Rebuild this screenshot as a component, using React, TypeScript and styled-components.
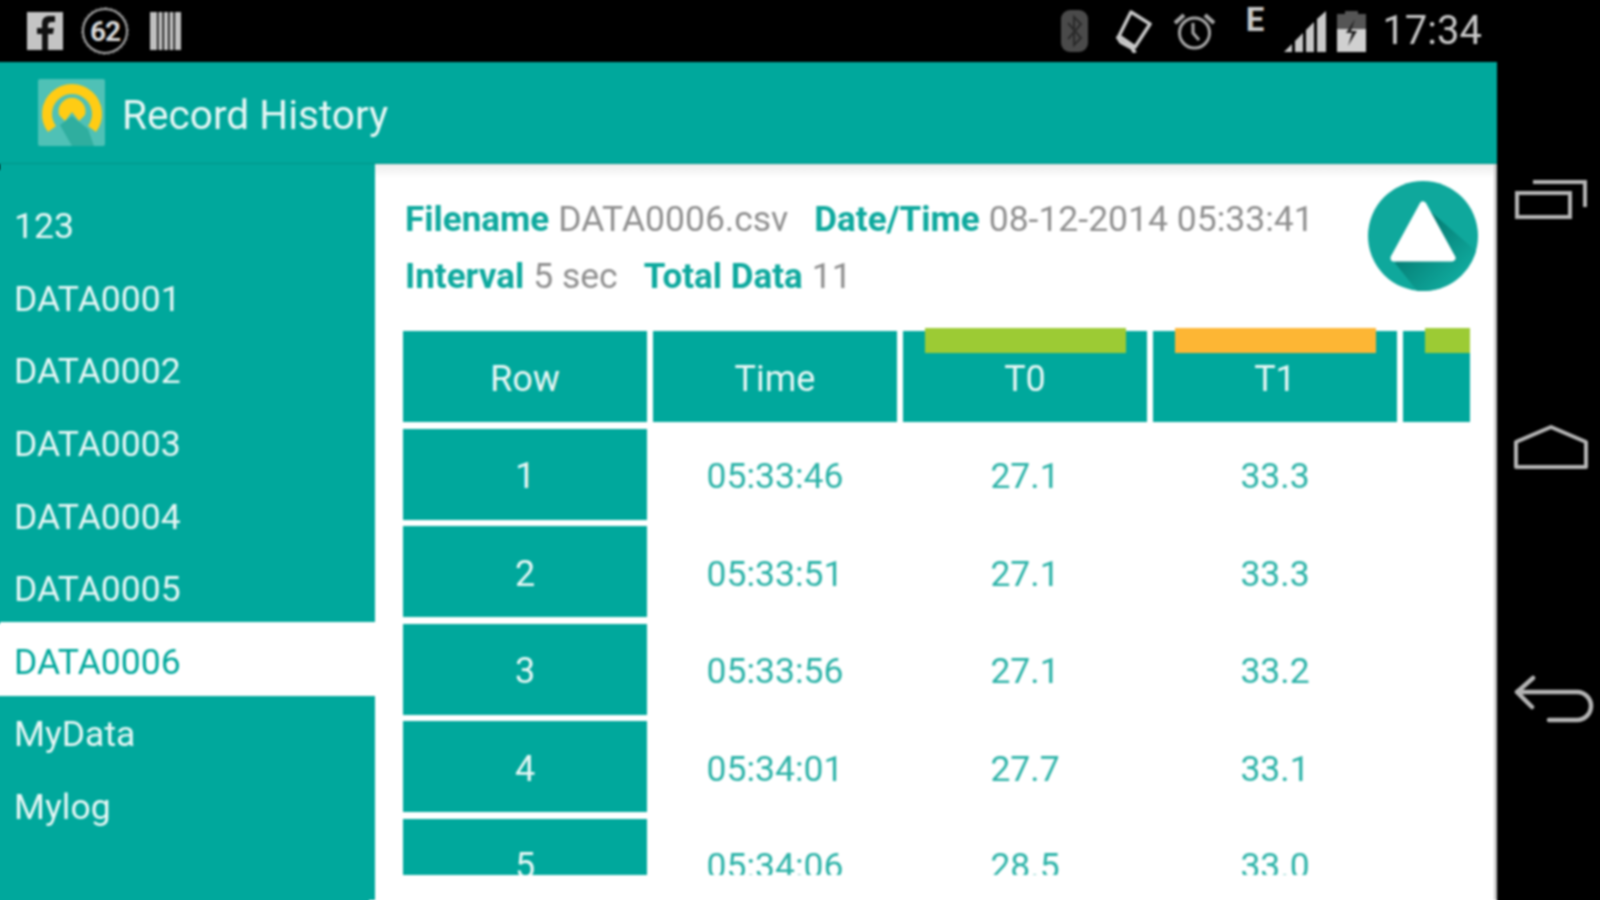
import React from "react";
import styled, { createGlobalStyle } from "styled-components";

const TEAL = "#00a89c";
const font = `Roboto, "Liberation Sans", sans-serif`;

const Global = createGlobalStyle`
  html, body { margin: 0; padding: 0; background: #000; overflow: hidden; }
  #root { width: 1600px; height: 900px; }
`;
const Frame = styled.div`
  width: 1600px; height: 900px; display: flex; background: #000;
  font-family: ${font}; filter: blur(0.8px);
`;
const Main = styled.div`
  width: 1497px; flex: none; display: flex; flex-direction: column; height: 900px;
`;
const StatusBar = styled.div`
  height: 62px; flex: none; background: #000; display: flex; align-items: center;
  justify-content: space-between; padding: 0 15px 0 27px; color: #c4c4c4;
`;
const StatusGroup = styled.div`display: flex; align-items: center;`;
const Slot = styled.span`display: flex; align-items: center; margin-left: ${p => p.$ml ?? 0}px;`;
const Time = styled.span`font-size: 40px; color: #c8c8c8; line-height: 62px;`;
const Badge = styled.div`
  width: 42px; height: 42px; border: 2px solid #a8a8a8; border-radius: 50%; display: flex;
  align-items: center; justify-content: center; font-size: 28px; font-weight: 700; color: #d8d8d8; letter-spacing: -1px;
  outline: 1px dashed #555;
`;
const NetType = styled.span`
  font-size: 33px; font-weight: 700; color: #c8c8c8; line-height: 30px; margin-top: -22px;
`;
const AppBar = styled.header`
  height: 102px; flex: none; background: ${TEAL}; display: flex; align-items: center;
  padding-left: 38px; gap: 17px; border-bottom: 1px solid #009488; box-sizing: border-box;
  box-shadow: -6px 0 0 ${TEAL};
`;
const AppTitle = styled.h1`margin: 0; padding-top: 4px; font-size: 40.600px; font-weight: 400; color: #e6f7f5;`;
const Body = styled.div`
  flex: 1; min-height: 0; display: flex; background: #fff; border-right: 3px solid #c9c9c9;
  box-shadow: 0 6px 0 #fff;
`;
const Sidebar = styled.nav`
  width: 375px; flex: none; background: ${TEAL}; padding-top: 24px; box-sizing: border-box;
  display: flex; flex-direction: column; box-shadow: -6px 6px 0 ${TEAL};
`;
const SideItem = styled.div`
  height: 72.6px; flex: none; padding: 4px 0 0 14px; box-sizing: border-box; display: flex; align-items: center;
  font-size: 35.500px; color: ${p => (p.$active ? TEAL : "#e6f7f5")};
  background: ${p => (p.$active ? "#fff" : "transparent")};
  box-shadow: ${p => (p.$active ? "0 -2px 0 #fff, -6px 0 0 #fff" : "none")};
`;
const Content = styled.section`
  flex: 1; min-width: 0; padding: 0 16px 0 28px; box-sizing: border-box; display: flex; flex-direction: column;
  background: linear-gradient(#ececec, #fff 14px);
`;
const InfoRow = styled.div`display: flex; justify-content: space-between; height: 164px; flex: none;`;
const InfoText = styled.div`padding: 26px 0 0 2px; display: flex; flex-direction: column;`;
const InfoLine = styled.div`display: flex; height: 57px; align-items: center; font-size: 35.500px; color: #8f8f8f; gap: 26px; white-space: nowrap;`;
const Label = styled.b`font-size: 35px; font-weight: 700; color: #0ea99e; margin-right: 9px;`;
const Fab = styled.svg`width: 110px; height: 110px; flex: none; margin-top: 17px;`;
const Table = styled.div`
  width: 1067px; height: 547px; overflow: hidden; display: flex; flex-direction: column; gap: 6.5px; padding-top: 3px;
  box-sizing: border-box;
`;
const TRow = styled.div`display: grid; grid-template-columns: repeat(5, 244px); column-gap: 6px; flex: none; height: 91px;`;
const HeadCell = styled.div`
  position: relative; background: ${TEAL}; color: #e6f7f5; font-size: 36px; padding-top: 4px; box-sizing: border-box; display: flex; align-items: center; justify-content: center;
`;
const ColorBar = styled.div`
  position: absolute; top: -3px; left: 22px; width: 201px; height: 25px; background: ${p => p.$c};
`;
const Val = styled.div`font-size: 35.500px; color: #2cb3a8; display: flex; align-items: center; justify-content: center; padding-top: 4px;`;
const NavRail = styled.aside`
  width: 101px; flex: none; margin-left: 2px; display: flex; flex-direction: column; align-items: center; gap: 200px; padding-top: 176px; box-sizing: border-box;
`;

const rows = [
  ["1", "05:33:46", "27.1", "33.3"],
  ["2", "05:33:51", "27.1", "33.3"],
  ["3", "05:33:56", "27.1", "33.2"],
  ["4", "05:34:01", "27.7", "33.1"],
  ["5", "05:34:06", "28.5", "33.0"],
];
const side = ["123", "DATA0001", "DATA0002", "DATA0003", "DATA0004", "DATA0005", "DATA0006", "MyData", "Mylog"];

const FbIcon = () => (
  <svg width="36" height="38" viewBox="0 0 36 38">
    <rect width="36" height="38" fill="#c4c4c4" />
    <path d="M15 38V22h-5v-6h5v-4c0-6 3-8 8-8h5v6h-3c-3 0-4 1-4 3v3h6l-1 6h-5v16z" fill="#111" />
  </svg>
);
const Barcode = () => (
  <svg width="31" height="38" viewBox="0 0 31 38" fill="#c0c0c0">
    <rect x="0" width="7" height="38" /><rect x="8.500" width="4" height="38" /><rect x="14" width="4" height="38" />
    <rect x="19.500" width="4" height="38" /><rect x="25" width="6" height="38" />
  </svg>
);
const Bluetooth = () => (
  <svg width="27" height="42" viewBox="0 0 27 42">
    <rect width="27" height="42" rx="9" fill="#4a4a4a" />
    <path d="M7 13l13 15-7 7V7l7 7L7 29" fill="none" stroke="#2a2a2a" strokeWidth="2" />
  </svg>
);
const Rotate = () => (
  <svg width="36" height="44" viewBox="0 0 36 44" fill="none" stroke="#c8c8c8" strokeWidth="3.500">
    <path d="M15 3L34 15 19 38 3 27z" strokeLinejoin="round" />
    <path d="M1 27l4 6 11 6 3 5" strokeWidth="4" />
  </svg>
);
const Alarm = () => (
  <svg width="41" height="38" viewBox="0 0 41 38" fill="none" stroke="#a8a8a8" strokeWidth="3">
    <circle cx="20.500" cy="21" r="15" />
    <path d="M19 11v10l6 7" /><path d="M1 11l9-8M40 11l-9-8" strokeWidth="4" />
  </svg>
);
const Signal = () => (
  <svg width="43" height="41" viewBox="0 0 43 41" fill="#c8c8c8">
    <path d="M0 41l8-8v8zM11 41V30l8-8v19zM22 41V19l8-8v30zM33 41V8l9-8v41z" />
  </svg>
);
const Battery = () => (
  <svg width="29" height="41" viewBox="0 0 29 41">
    <rect x="8" width="13" height="4" fill="#555" />
    <rect y="3" width="29" height="38" fill="#555" />
    <rect y="18" width="29" height="23" fill="#d0d0d0" />
    <path d="M18 8l-9 14h6l-4 13 9-15h-6z" fill="#222" />
  </svg>
);
const Logo = () => (
  <svg width="67" height="67" viewBox="0 0 67 67">
    <rect width="67" height="67" rx="2" fill="#4fc1b6" />
    <path d="M22 46L34 37l16 13 6 17H34z" fill="#2fae9f" />
    <path d="M14 50A25 25 0 1 1 54 50" fill="none" stroke="#ffcc14" strokeWidth="10" />
    <path d="M21 36a13.500 13.500 0 1 1 26 0l-6 6-7-9-7 9z" fill="#ffcc14" />
  </svg>
);
const Triangle = () => (
  <>
    <defs>
      <linearGradient id="fabShade" x1="0.300" y1="0.300" x2="0.800" y2="0.800">
        <stop offset="0" stopColor="#067f76" />
        <stop offset="1" stopColor="#0fa89c" />
      </linearGradient>
    </defs>
    <circle cx="55" cy="55" r="55" fill="#0fa89c" />
    <path d="M62 30L108 70A55 55 0 0 1 49 109.700L27 82z" fill="url(#fabShade)" />
    <path d="M55 24L84 77H26z" fill="#fff" stroke="#fff" strokeWidth="7" strokeLinejoin="round" />
  </>
);

export default function App() {
  return (
    <Frame>
      <Global />
      <Main>
        <StatusBar>
          <StatusGroup>
            <FbIcon />
            <Slot $ml={19}><Badge>62</Badge></Slot>
            <Slot $ml={22}><Barcode /></Slot>
          </StatusGroup>
          <StatusGroup>
            <Bluetooth />
            <Slot $ml={28}><Rotate /></Slot>
            <Slot $ml={22}><Alarm /></Slot>
            <Slot $ml={31}><NetType>E</NetType></Slot>
            <Slot $ml={20}><Signal /></Slot>
            <Slot $ml={10}><Battery /></Slot>
            <Slot $ml={16}><Time>17:34</Time></Slot>
          </StatusGroup>
        </StatusBar>
        <AppBar>
          <Logo />
          <AppTitle>Record History</AppTitle>
        </AppBar>
        <Body>
          <Sidebar>
            {side.map(s => (
              <SideItem key={s} $active={s === "DATA0006"}>{s}</SideItem>
            ))}
          </Sidebar>
          <Content>
            <InfoRow>
              <InfoText>
                <InfoLine>
                  <span><Label>Filename</Label>DATA0006.csv</span>
                  <span><Label>Date/Time</Label>08-12-2014 05:33:41</span>
                </InfoLine>
                <InfoLine>
                  <span><Label>Interval</Label>5 sec</span>
                  <span><Label>Total Data</Label>11</span>
                </InfoLine>
              </InfoText>
              <Fab viewBox="0 0 110 110"><Triangle /></Fab>
            </InfoRow>
            <Table>
              <TRow>
                <HeadCell>Row</HeadCell>
                <HeadCell>Time</HeadCell>
                <HeadCell><ColorBar $c="#9ccb34" />T0</HeadCell>
                <HeadCell><ColorBar $c="#fdb634" />T1</HeadCell>
                <HeadCell><ColorBar $c="#9ccb34" /></HeadCell>
              </TRow>
              {rows.map(r => (
                <TRow key={r[0]}>
                  <HeadCell>{r[0]}</HeadCell>
                  <Val>{r[1]}</Val>
                  <Val>{r[2]}</Val>
                  <Val>{r[3]}</Val>
                </TRow>
              ))}
            </Table>
          </Content>
        </Body>
      </Main>
      <NavRail>
        <svg width="80" height="48" viewBox="0 0 80 48" fill="none" stroke="#b4b4b4" strokeWidth="4">
          <rect x="7" y="17" width="53" height="24" />
          <path d="M23 6h52v25" />
        </svg>
        <svg width="80" height="48" viewBox="0 0 80 48" fill="none" stroke="#b4b4b4" strokeWidth="4">
          <path d="M6 18L41 3l35 15v25H6z" strokeLinejoin="round" />
        </svg>
        <svg width="90" height="52" viewBox="0 0 90 52" fill="none" stroke="#b4b4b4" strokeWidth="4.500" strokeLinecap="round" strokeLinejoin="round">
          <path d="M28 6L12 20l15 15M12 20h60A14 14 0 0 1 72 48H44" />
        </svg>
      </NavRail>
    </Frame>
  );
}
